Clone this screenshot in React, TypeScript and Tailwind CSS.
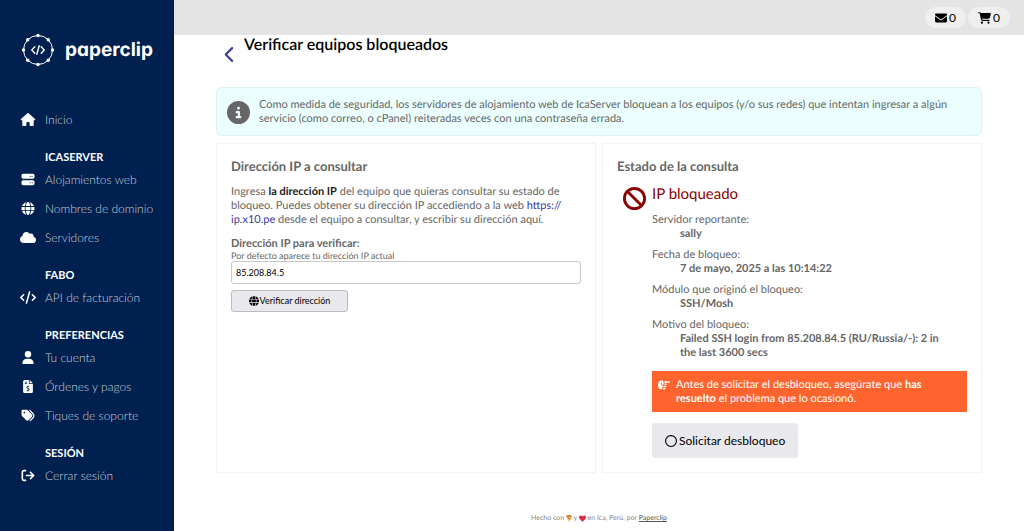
import React, { useState } from 'react';
import {
  FaArrowRightFromBracket,
  FaBan,
  FaCartShopping,
  FaChevronLeft,
  FaCircleInfo,
  FaCloud,
  FaCode,
  FaEnvelope,
  FaFileInvoiceDollar,
  FaGlobe,
  FaHandPointRight,
  FaHeart,
  FaHouse,
  FaRegCircle,
  FaServer,
  FaTags,
  FaUser,
} from 'react-icons/fa6';
import type { IconType } from 'react-icons';

type NavItem = { label: string; icon: IconType };
type NavGroup = { title?: string; items: NavItem[] };

const navGroups: NavGroup[] = [
  { items: [{ label: 'Inicio', icon: FaHouse }] },
  {
    title: 'ICASERVER',
    items: [
      { label: 'Alojamientos web', icon: FaServer },
      { label: 'Nombres de dominio', icon: FaGlobe },
      { label: 'Servidores', icon: FaCloud },
    ],
  },
  { title: 'FABO', items: [{ label: 'API de facturación', icon: FaCode }] },
  {
    title: 'PREFERENCIAS',
    items: [
      { label: 'Tu cuenta', icon: FaUser },
      { label: 'Órdenes y pagos', icon: FaFileInvoiceDollar },
      { label: 'Tiques de soporte', icon: FaTags },
    ],
  },
  { title: 'SESIÓN', items: [{ label: 'Cerrar sesión', icon: FaArrowRightFromBracket }] },
];

const details = [
  { term: 'Servidor reportante:', value: 'sally' },
  { term: 'Fecha de bloqueo:', value: '7 de mayo, 2025 a las 10:14:22' },
  { term: 'Módulo que originó el bloqueo:', value: 'SSH/Mosh' },
  { term: 'Motivo del bloqueo:', value: 'Failed SSH login from 85.208.84.5 (RU/Russia/-): 2 in the last 3600 secs' },
];

const Logo = () => (
  <a href="#" className="flex items-center gap-[10px] pl-[21px] text-white">
    <svg viewBox="0 0 34 34" className="h-[34px] w-[34px]" fill="none" stroke="currentColor">
      <circle cx="17" cy="17" r="14.5" strokeWidth="1" />
      <g fill="currentColor" stroke="none">
        <circle cx="17" cy="2.5" r="1.7" />
        <circle cx="17" cy="31.5" r="1.7" />
        <circle cx="2.5" cy="17" r="1.7" />
        <circle cx="31.5" cy="17" r="1.7" />
        <circle cx="6.7" cy="6.7" r="1.7" />
        <circle cx="27.3" cy="6.7" r="1.7" />
        <circle cx="6.7" cy="27.3" r="1.7" />
        <circle cx="27.3" cy="27.3" r="1.7" />
      </g>
      <path d="M13.8 13.8 10.8 17l3 3.2M20.2 13.8l3 3.2-3 3.2M18.2 12.8l-2.4 8.4" strokeWidth="1.4" strokeLinecap="round" />
    </svg>
    <span className="font-['Inter',sans-serif] text-[19px] leading-6 font-bold [font-feature-settings:'cv11']">paperclip</span>
  </a>
);

const PizzaIcon = () => (
  <svg viewBox="0 0 14 16" className="h-[7px] w-[6px]" aria-hidden="true">
    <path d="M1 3.5 7 16l6-12.5z" fill="#ffb636" />
    <path d="M0 3.5C1 .5 4 0 7 0s6 .5 7 3.5L12.5 5C9 3.5 5 3.5 1.5 5z" fill="#c97a3a" />
    <circle cx="5" cy="6.5" r="1.7" fill="#dd3b2e" />
    <circle cx="9" cy="8" r="1.5" fill="#dd3b2e" />
  </svg>
);

const Sidebar = () => (
  <aside className="w-[174px] shrink-0 border-r border-[#001a40] bg-[#00204f] pt-[33px]">
    <Logo />
    <nav className="mt-[38px]">
      {navGroups.map((group, i) => (
        <div key={i} className="mb-[17px]">
          {group.title && <h2 className="pl-[45px] text-[11px] leading-[14px] font-bold text-white">{group.title}</h2>}
          <ul>
            {group.items.map(({ label, icon: Icon }) => (
              <li key={label}>
                <a href="#" className="flex h-[29px] items-center gap-[9px] pl-5 text-xs font-light text-[#ccd2dc]">
                  <Icon className="h-[13px] w-4 shrink-0 text-white" />
                  {label}
                </a>
              </li>
            ))}
          </ul>
        </div>
      ))}
    </nav>
  </aside>
);

const TopBar = () => (
  <header className="flex h-[35px] items-center justify-end gap-[2px] bg-[#e4e4e4] pr-[14px] text-xs text-black">
    <button type="button" className="flex h-[21px] items-center gap-[2px] rounded-full bg-[#efefef] px-[10px]" aria-label="Mensajes">
      <FaEnvelope className="h-3 w-3" />0
    </button>
    <button type="button" className="flex h-[21px] items-center gap-[2px] rounded-full bg-[#efefef] px-[10px]" aria-label="Carrito">
      <FaCartShopping className="h-3 w-[13px]" />0
    </button>
  </header>
);

const QueryCard = () => {
  const [ip, setIp] = useState('85.208.84.5');

  return (
    <section className="border border-[#f2f2f2] px-[14px] pt-[13px] pb-[14px]">
      <h2 className="text-[13px] leading-[18px] font-bold">Dirección IP a consultar</h2>
      <p className="mt-[10px]">
        Ingresa <strong className="font-bold text-[#222]">la dirección IP</strong> del equipo que quieras consultar su estado de
        bloqueo. Puedes obtener su dirección IP accediendo a la web{' '}
        <a href="#" className="text-[#3b3b98]">https://<wbr />ip.x10.pe</a> desde el equipo a consultar, y escribir su dirección aquí.
      </p>
      <form onSubmit={e => e.preventDefault()} className="mt-[10px]">
        <label htmlFor="ip" className="block font-bold">Dirección IP para verificar:</label>
        <p className="text-[9px] leading-[10px]">Por defecto aparece tu dirección IP actual</p>
        <input
          id="ip"
          type="text"
          value={ip}
          onChange={e => setIp(e.target.value)}
          className="block h-[23px] w-full rounded-[3px] border border-[#c8c8c8] bg-white px-1 text-[9px] text-black"
        />
        <button type="submit" className="mt-[6px] flex h-[22px] w-[117px] items-center justify-center gap-px rounded-[3px] border border-[#bbbbc4] bg-[#e9e9ed] text-[9px] text-black">
          <FaGlobe className="h-[10px] w-[10px]" />Verificar dirección
        </button>
      </form>
    </section>
  );
};

const StatusCard = () => (
  <section className="border border-[#f2f2f2] px-[14px] pt-[13px] pb-[14px]">
    <h2 className="text-[13px] leading-[18px] font-bold">Estado de la consulta</h2>
    <div className="mt-[10px] flex gap-[6px] pl-[6px]">
      <FaBan className="mt-[2px] h-[23px] w-[23px] shrink-0 text-[#8b0000]" />
      <div className="min-w-0 flex-1">
        <h3 className="text-[15px] leading-[18px] text-[#8b0000]">IP bloqueado</h3>
        <dl className="mt-[10px] space-y-[7px]">
          {details.map(({ term, value }) => (
            <div key={term}>
              <dt>{term}</dt>
              <dd className="pr-3 pl-7 font-bold">{value}</dd>
            </div>
          ))}
        </dl>
        <div className="mt-[11px] flex gap-[6px] bg-[#ff642e] px-[6px] pt-[7px] pb-[6px] text-white">
          <FaHandPointRight className="mt-[1px] h-3 w-3 shrink-0" />
          <p>
            Antes de solicitar el desbloqueo, asegúrate que <strong className="font-bold">has resuelto</strong> el problema que lo ocasionó.
          </p>
        </div>
        <button type="button" className="mt-[11px] flex h-[35px] items-center gap-[2px] rounded-[3px] bg-[#e9e9ed] px-[13px] text-xs text-black">
          <FaRegCircle className="h-3 w-3" />Solicitar desbloqueo
        </button>
      </div>
    </div>
  </section>
);

const App: React.FC = () => (
  <div className="flex min-h-screen bg-white font-['Lato',sans-serif] text-[11px] leading-[14px] text-[#666] [text-rendering:geometricPrecision]">
    <Sidebar />
    <div className="flex min-w-0 flex-1 flex-col">
      <TopBar />
      <main className="px-[42px]">
        <div className="flex gap-2 pl-2">
          <a href="#" aria-label="Volver" className="mt-[11px] text-[#3b3b98]">
            <FaChevronLeft className="h-[17px] w-3" />
          </a>
          <h1 className="text-base leading-5 font-semibold text-black">Verificar equipos bloqueados</h1>
        </div>
        <div className="mt-6 flex items-center gap-[9px] rounded-md border border-[#dcf3f3] bg-[#ebffff] px-[10px] pt-[10px] pb-[9px]">
          <FaCircleInfo className="h-[23px] w-[23px] shrink-0" />
          <p>
            Como medida de seguridad, los servidores de alojamiento web de IcaServer bloquean a los equipos (y/o sus redes) que
            intentan ingresar a algún servicio (como correo, o cPanel) reiteradas veces con una contraseña errada.
          </p>
        </div>
        <div className="mt-[7px] grid grid-cols-2 gap-[6px]">
          <QueryCard />
          <StatusCard />
        </div>
      </main>
      <footer className="mt-auto pb-2 text-center text-[7px] leading-[10px] text-[#888]">
        Hecho con <span className="inline-flex align-middle"><PizzaIcon /></span> y{' '}
        <span className="inline-flex align-middle"><FaHeart className="h-[7px] w-[7px] text-[#dd2e44]" /></span> en Ica, Perú, por{' '}
        <a href="#" className="text-[#555] underline">Paperclip</a>
      </footer>
    </div>
  </div>
);

export default App;
